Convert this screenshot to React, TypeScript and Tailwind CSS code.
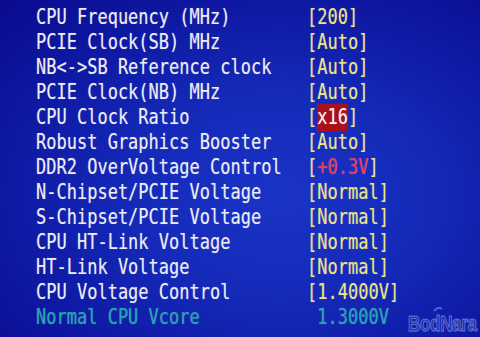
import React from "react";

type Row = { label: string; value: React.ReactNode; labelClass?: string };

const Y = "text-[#ece47e]";

const rows: Row[] = [
  { label: "CPU Frequency (MHz)", value: <span className={Y}>[200]</span> },
  { label: "PCIE Clock(SB) MHz", value: <span className={Y}>[Auto]</span> },
  { label: "NB<->SB Reference clock", value: <span className={Y}>[Auto]</span> },
  { label: "PCIE Clock(NB) MHz", value: <span className={Y}>[Auto]</span> },
  {
    label: "CPU Clock Ratio",
    value: (
      <span className={Y}>
        [<span className="bg-[#a8101c] text-[#f4f0f0] inline-block leading-[23px]">x16</span>]
      </span>
    ),
  },
  { label: "Robust Graphics Booster", value: <span className={Y}>[Auto]</span> },
  {
    label: "DDR2 OverVoltage Control",
    value: (
      <span className={Y}>
        [<span className="text-[#ee3a4c]">+0.3V</span>]
      </span>
    ),
  },
  { label: "N-Chipset/PCIE Voltage", value: <span className={Y}>[Normal]</span> },
  { label: "S-Chipset/PCIE Voltage", value: <span className={Y}>[Normal]</span> },
  { label: "CPU HT-Link Voltage", value: <span className={Y}>[Normal]</span> },
  { label: "HT-Link Voltage", value: <span className={Y}>[Normal]</span> },
  { label: "CPU Voltage Control", value: <span className={Y}>[1.4000V]</span> },
  {
    label: "Normal CPU Vcore",
    labelClass: "text-[#1aa8ae]",
    value: <span className="text-[#1aa8ae]">{"\u00a01.3000V"}</span>,
  },
];

export default function App() {
  return (
    <div className="relative w-[480px] h-[337px] overflow-hidden bg-[radial-gradient(ellipse_at_58%_58%,#1a34c6_0%,#1429b8_38%,#0e18a2_70%,#0a0a8e_100%)]">
      <div className="flex flex-col pt-[5px] pl-[36px] font-['DejaVu_Sans_Mono',monospace] text-[17px] leading-[25px] whitespace-pre [text-shadow:0_0_1px_rgba(255,255,255,0.35)]">
        {rows.map((r, i) => (
          <div key={i} className="flex h-[25px] scale-y-[1.2] origin-center">
            <div className={`w-[271px] shrink-0 ${r.labelClass ?? "text-[#ececf4]"}`}>{r.label}</div>
            <div>{r.value}</div>
          </div>
        ))}
      </div>
      <div className="absolute left-[408px] top-[310px] font-['Liberation_Sans',sans-serif] font-bold text-[17px] leading-[24px] tracking-[-0.3px] scale-y-[1.25] origin-top-left text-[#1c2a9a] [-webkit-text-stroke:1px_#5a6ad0]">
        BodNara
      </div>
      <svg className="absolute left-[433px] top-[306px]" width="10" height="6" viewBox="0 0 10 6">
        <path d="M1 5 Q5 0 9 3" stroke="#5a6ad0" strokeWidth="1.5" fill="none" />
      </svg>
    </div>
  );
}
